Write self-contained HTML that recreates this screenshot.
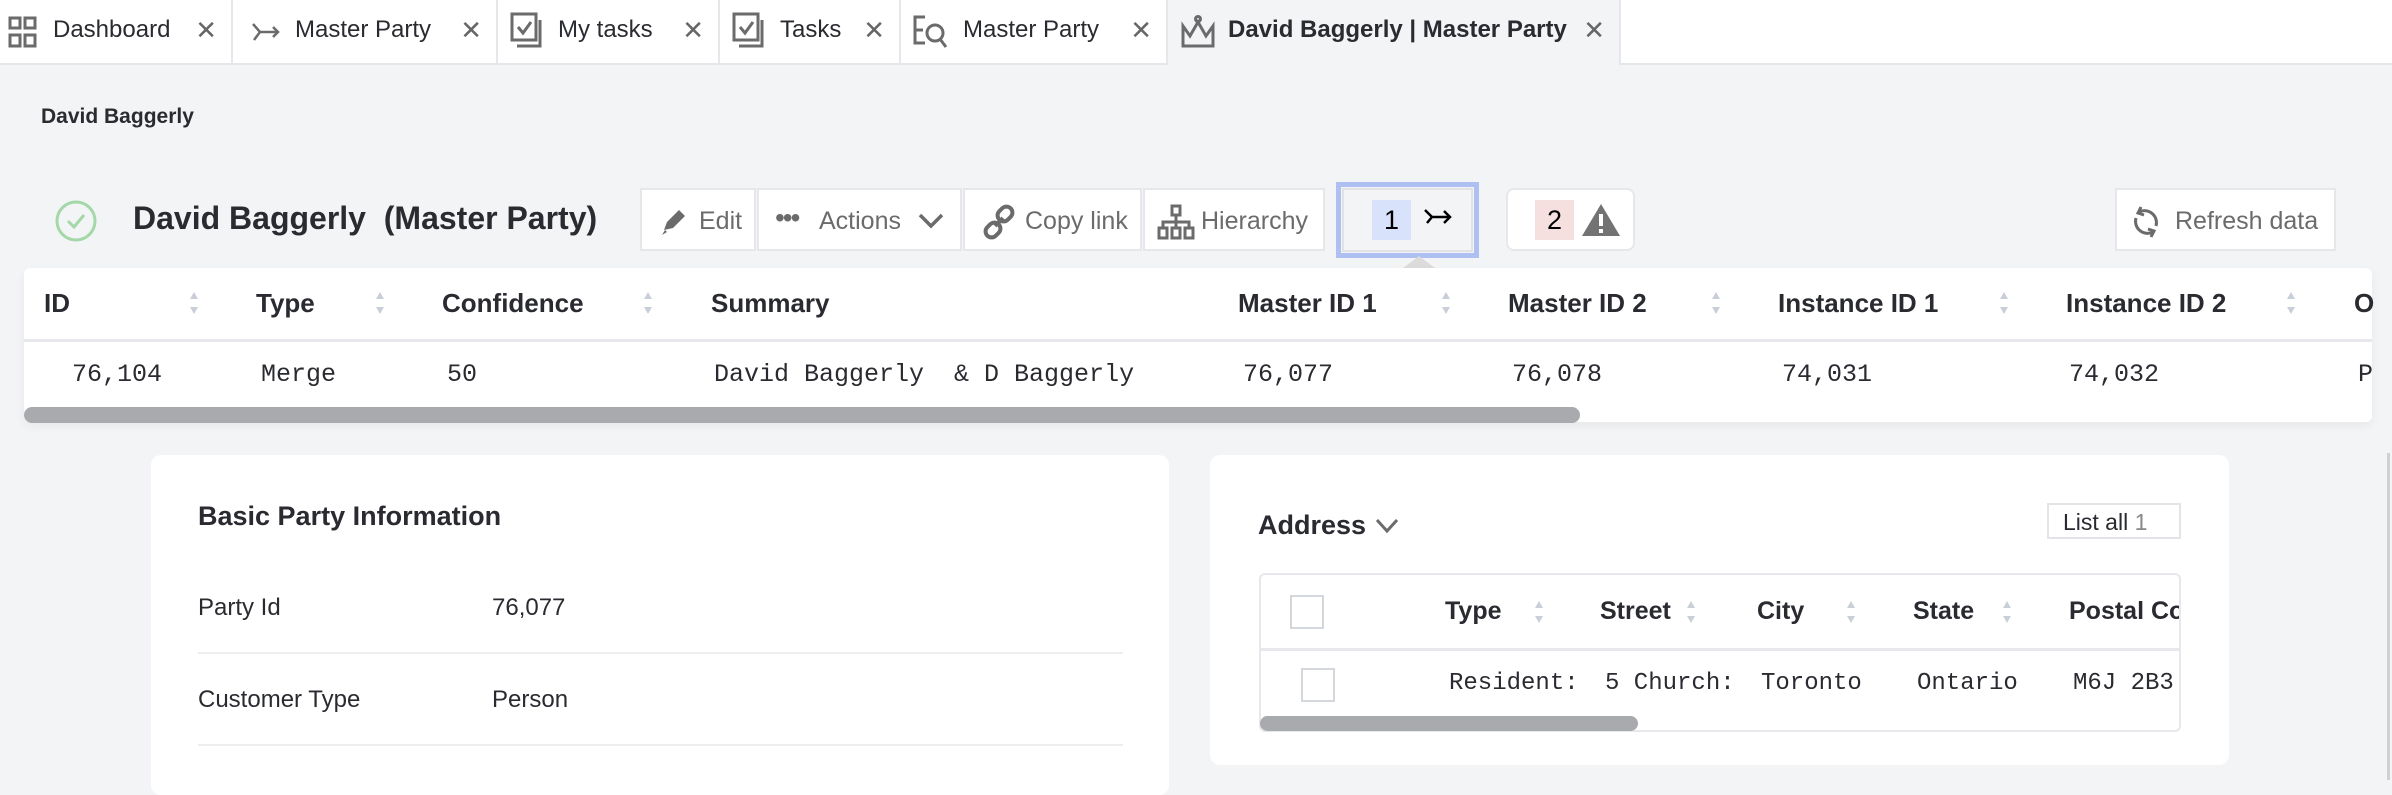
<!DOCTYPE html>
<html><head><meta charset="utf-8"><style>
*{margin:0;padding:0;box-sizing:border-box}
body{width:2392px;height:780px;background:#f3f4f6;font-family:"Liberation Sans",sans-serif;color:#2a2b30;position:relative;overflow:hidden}
.a{position:absolute}
.tab{position:absolute;top:0;height:65px;background:#fff;border-right:2px solid #e6e7ea;border-bottom:2px solid #e6e7ea;font-size:24px;color:#2a2b30;display:flex;align-items:center}
.tab .x{color:#666;font-size:26px;position:absolute;right:14px;top:15px}
.btn{position:absolute;top:188px;height:63px;background:#fff;border:2px solid #e6e7ea;font-size:25px;color:#6b6b6b;display:flex;align-items:center}
.th{position:absolute;font-size:26px;font-weight:bold;color:#2a2b30}
.td{position:absolute;font-family:"Liberation Mono",monospace;font-size:25px;color:#2a2b30}
.srt{position:absolute;width:10px;height:22px}
.srt:before{content:"";position:absolute;left:1px;top:0;border-left:4px solid transparent;border-right:4px solid transparent;border-bottom:7px solid #c9ced8}
.srt:after{content:"";position:absolute;left:1px;bottom:0;border-left:4px solid transparent;border-right:4px solid transparent;border-top:7px solid #c9ced8}
.card{position:absolute;background:#fff;border-radius:10px}
.lbl{position:absolute;font-size:24px;color:#2a2b30}
.hr{position:absolute;height:2px;background:#eceef0}
.cb{position:absolute;width:34px;height:34px;border:2px solid #d4d7dc;background:#fff}
</style></head><body>
<div class="a" style="left:0;top:0;width:2392px;height:65px;background:#fff;border-bottom:2px solid #e6e7ea"></div>
<div class="tab" style="left:0;width:233px">
<svg class="a" style="left:8px;top:16px" width="30" height="32" viewBox="0 0 30 32" fill="none" stroke="#6b6b6b" stroke-width="3"><rect x="2" y="2" width="10" height="10"/><rect x="17" y="2" width="10" height="10"/><rect x="2" y="19" width="10" height="11"/><rect x="17" y="19" width="10" height="11"/></svg>
<span class="a" style="left:53px;top:16px">Dashboard</span><span class="x">✕</span></div>
<div class="tab" style="left:233px;width:265px">
<svg class="a" style="left:18px;top:20px" width="30" height="24" viewBox="0 0 30 24" fill="none" stroke="#6b6b6b" stroke-width="2.5"><path d="M2 4l7 8h18M22 7l5 5-5 5M9 12l-6 8"/></svg>
<span class="a" style="left:62px;top:16px">Master Party</span><span class="x">✕</span></div>
<div class="tab" style="left:498px;width:222px">
<svg class="a" style="left:12px;top:12px" width="34" height="38" viewBox="0 0 34 38" fill="none" stroke="#6b6b6b" stroke-width="3"><rect x="2" y="2" width="24" height="26"/><path d="M30 8v26H7"/><path d="M8 15l5 6 8-11"/></svg>
<span class="a" style="left:60px;top:16px">My tasks</span><span class="x">✕</span></div>
<div class="tab" style="left:720px;width:181px">
<svg class="a" style="left:12px;top:12px" width="34" height="38" viewBox="0 0 34 38" fill="none" stroke="#6b6b6b" stroke-width="3"><rect x="2" y="2" width="24" height="26"/><path d="M30 8v26H7"/><path d="M8 15l5 6 8-11"/></svg>
<span class="a" style="left:60px;top:16px">Tasks</span><span class="x">✕</span></div>
<div class="tab" style="left:901px;width:267px">
<svg class="a" style="left:12px;top:14px" width="36" height="36" viewBox="0 0 36 36" fill="none" stroke="#6b6b6b" stroke-width="3"><path d="M12 3H2v26h10M2 16h8"/><circle cx="22" cy="19" r="8"/><path d="M27 25l6 8"/></svg>
<span class="a" style="left:62px;top:16px">Master Party</span><span class="x">✕</span></div>
<div class="tab" style="left:1168px;width:453px;background:#f3f4f6;border-bottom:none">
<svg class="a" style="left:12px;top:14px" width="36" height="36" viewBox="0 0 36 36" fill="none" stroke="#6b6b6b" stroke-width="3"><path d="M3 12l7 10 8-14 8 14 7-10v20H3z"/><circle cx="18" cy="5" r="2.5"/></svg>
<span class="a" style="left:60px;top:16px;font-weight:bold">David Baggerly | Master Party</span><span class="x">✕</span></div>

<div class="a" style="left:41px;top:105px;font-size:21px;font-weight:bold">David Baggerly</div>

<svg class="a" style="left:54px;top:199px" width="44" height="44" viewBox="0 0 44 44" fill="none" stroke="#a5d8a8" stroke-width="3"><circle cx="22" cy="22" r="19"/><path d="M14 22l6 6 10-12"/></svg>
<div class="a" style="left:133px;top:200px;font-size:32px;font-weight:bold;white-space:pre">David Baggerly  (Master Party)</div>

<div class="btn" style="left:640px;width:116px"><svg class="a" style="left:18px;top:18px" width="28" height="28" viewBox="0 0 28 28" fill="#6b6b6b"><path d="M4 22l3-8 12-12 6 6-12 12z"/><path d="M2 27l3-5 2 2z"/></svg><span class="a" style="left:57px;top:17px">Edit</span></div>
<div class="btn" style="left:757px;width:205px"><span class="a" style="left:16px;top:12px;font-size:28px;letter-spacing:-2px">•••</span><span class="a" style="left:60px;top:17px">Actions</span><svg class="a" style="left:158px;top:22px" width="28" height="18" viewBox="0 0 28 18" fill="none" stroke="#6b6b6b" stroke-width="3.5"><path d="M3 3l11 11 11-11"/></svg></div>
<div class="btn" style="left:963px;width:179px"><svg class="a" style="left:16px;top:14px" width="36" height="36" viewBox="0 0 36 36" fill="none" stroke="#6b6b6b" stroke-width="4"><rect x="18" y="2" width="12" height="16" rx="6" transform="rotate(45 24 10)"/><rect x="6" y="18" width="12" height="16" rx="6" transform="rotate(45 12 26)"/><path d="M14 22l8-8"/></svg><span class="a" style="left:60px;top:17px">Copy link</span></div>
<div class="btn" style="left:1143px;width:182px"><svg class="a" style="left:12px;top:14px" width="38" height="36" viewBox="0 0 38 36" fill="none" stroke="#6b6b6b" stroke-width="3"><rect x="15" y="2" width="8" height="9"/><path d="M19 11v7M6 24v-6h26v6M19 18v6"/><rect x="2" y="24" width="8" height="10"/><rect x="15" y="24" width="8" height="10"/><rect x="28" y="24" width="8" height="10"/></svg><span class="a" style="left:56px;top:17px">Hierarchy</span></div>

<div class="a" style="left:1336px;top:182px;width:143px;height:76px;border:5px solid #aec0f1;background:#f3f4f6"></div>
<div class="a" style="left:1342px;top:188px;width:131px;height:64px;border:2px solid #e0e2e6"></div>
<div class="a" style="left:1372px;top:200px;width:39px;height:40px;background:#d8e2fa;font-size:27px;text-align:center;line-height:40px;color:#000">1</div>
<svg class="a" style="left:1424px;top:207px" width="28" height="22" viewBox="0 0 28 22" fill="none" stroke="#000" stroke-width="2.5"><path d="M1 3l7 7h18M20 4l6 6-6 6M8 10l-5 6"/></svg>
<div class="a" style="left:1403px;top:256px;width:0;height:0;border-left:16px solid transparent;border-right:16px solid transparent;border-bottom:12px solid #dcdcdc"></div>

<div class="a" style="left:1506px;top:188px;width:129px;height:63px;background:#fff;border:2px solid #e6e7ea;border-radius:8px"></div>
<div class="a" style="left:1535px;top:200px;width:39px;height:40px;background:#f6dfdf;font-size:27px;text-align:center;line-height:40px;color:#000">2</div>
<svg class="a" style="left:1581px;top:203px" width="40" height="34" viewBox="0 0 40 34"><path d="M20 1L39 33H1z" fill="#737373"/><rect x="18" y="11" width="4" height="12" fill="#fff"/><rect x="18" y="26" width="4" height="4" fill="#fff"/></svg>

<div class="btn" style="left:2115px;width:221px"><svg class="a" style="left:14px;top:14px" width="30" height="36" viewBox="0 0 30 36" fill="none" stroke="#6b6b6b" stroke-width="3"><path d="M8 8a12 12 0 0 1 17 14M22 28a12 12 0 0 1-17-14"/><path d="M10 3l-3 6 6 2M20 33l3-6-6-2"/></svg><span class="a" style="left:58px;top:17px">Refresh data</span></div>

<div class="card" style="left:24px;top:268px;width:2348px;height:154px;border-radius:6px;box-shadow:0 4px 10px rgba(0,0,0,.05)"></div>
<div class="hr" style="left:24px;top:339px;width:2348px;height:3px;background:#e6e8eb"></div>
<div class="th" style="left:44px;top:288px">ID</div><div class="srt" style="left:189px;top:292px"></div>
<div class="th" style="left:256px;top:288px">Type</div><div class="srt" style="left:375px;top:292px"></div>
<div class="th" style="left:442px;top:288px">Confidence</div><div class="srt" style="left:643px;top:292px"></div>
<div class="th" style="left:711px;top:288px">Summary</div>
<div class="th" style="left:1238px;top:288px">Master ID 1</div><div class="srt" style="left:1441px;top:292px"></div>
<div class="th" style="left:1508px;top:288px">Master ID 2</div><div class="srt" style="left:1711px;top:292px"></div>
<div class="th" style="left:1778px;top:288px">Instance ID 1</div><div class="srt" style="left:1999px;top:292px"></div>
<div class="th" style="left:2066px;top:288px">Instance ID 2</div><div class="srt" style="left:2286px;top:292px"></div>
<div class="th" style="left:2354px;top:288px">O</div>
<div class="td" style="left:72px;top:360px">76,104</div>
<div class="td" style="left:261px;top:360px">Merge</div>
<div class="td" style="left:447px;top:360px">50</div>
<div class="td" style="left:714px;top:360px;white-space:pre">David Baggerly  &amp; D Baggerly</div>
<div class="td" style="left:1243px;top:360px">76,077</div>
<div class="td" style="left:1512px;top:360px">76,078</div>
<div class="td" style="left:1782px;top:360px">74,031</div>
<div class="td" style="left:2069px;top:360px">74,032</div>
<div class="td" style="left:2358px;top:360px">P</div>
<div class="a" style="left:24px;top:407px;width:1556px;height:16px;background:#a9aaad;border-radius:8px"></div>

<div class="card" style="left:151px;top:455px;width:1018px;height:340px"></div>
<div class="a" style="left:198px;top:501px;font-size:27px;font-weight:bold">Basic Party Information</div>
<div class="lbl" style="left:198px;top:594px">Party Id</div><div class="lbl" style="left:492px;top:594px">76,077</div>
<div class="hr" style="left:198px;top:652px;width:925px"></div>
<div class="lbl" style="left:198px;top:686px">Customer Type</div><div class="lbl" style="left:492px;top:686px">Person</div>
<div class="hr" style="left:198px;top:744px;width:925px"></div>

<div class="card" style="left:1210px;top:455px;width:1019px;height:310px"></div>
<div class="a" style="left:1258px;top:510px;font-size:27px;font-weight:bold">Address</div>
<svg class="a" style="left:1375px;top:518px" width="24" height="16" viewBox="0 0 24 16" fill="none" stroke="#6b6b6b" stroke-width="3"><path d="M2 2l10 11 10-11"/></svg>
<div class="a" style="left:2047px;top:503px;width:134px;height:36px;border:2px solid #e2e4e8;font-size:23px;padding:4px 0 0 14px">List all <span style="color:#888">1</span></div>
<div class="a" style="left:1259px;top:573px;width:922px;height:159px;border:2px solid #e6e8eb;border-radius:6px"></div>
<div class="hr" style="left:1259px;top:648px;width:922px;height:3px;background:#e6e8eb"></div>
<div class="cb" style="left:1290px;top:595px"></div>
<div class="th" style="left:1445px;top:597px;font-size:25px">Type</div><div class="srt" style="left:1534px;top:601px"></div>
<div class="th" style="left:1600px;top:597px;font-size:25px">Street</div><div class="srt" style="left:1686px;top:601px"></div>
<div class="th" style="left:1757px;top:597px;font-size:25px">City</div><div class="srt" style="left:1846px;top:601px"></div>
<div class="th" style="left:1913px;top:597px;font-size:25px">State</div><div class="srt" style="left:2002px;top:601px"></div>
<div class="a" style="left:2069px;top:592px;width:110px;height:40px;overflow:hidden"><div class="th" style="left:0;top:5px;font-size:25px;white-space:nowrap">Postal Code</div></div>
<div class="cb" style="left:1301px;top:668px"></div>
<div class="a" style="left:1449px;top:668px;width:732px;height:40px;overflow:hidden">
<div class="td" style="left:0;top:2px;font-size:24px">Resident:</div>
<div class="td" style="left:156px;top:2px;font-size:24px">5 Church:</div>
<div class="td" style="left:312px;top:2px;font-size:24px">Toronto</div>
<div class="td" style="left:468px;top:2px;font-size:24px">Ontario</div>
<div class="td" style="left:624px;top:2px;font-size:24px;white-space:pre">M6J 2B3</div>
</div>
<div class="a" style="left:1260px;top:716px;width:378px;height:15px;background:#a9aaad;border-radius:8px"></div>

<div class="a" style="left:2387px;top:453px;width:3px;height:327px;background:#cfd1d4"></div>
</body></html>
